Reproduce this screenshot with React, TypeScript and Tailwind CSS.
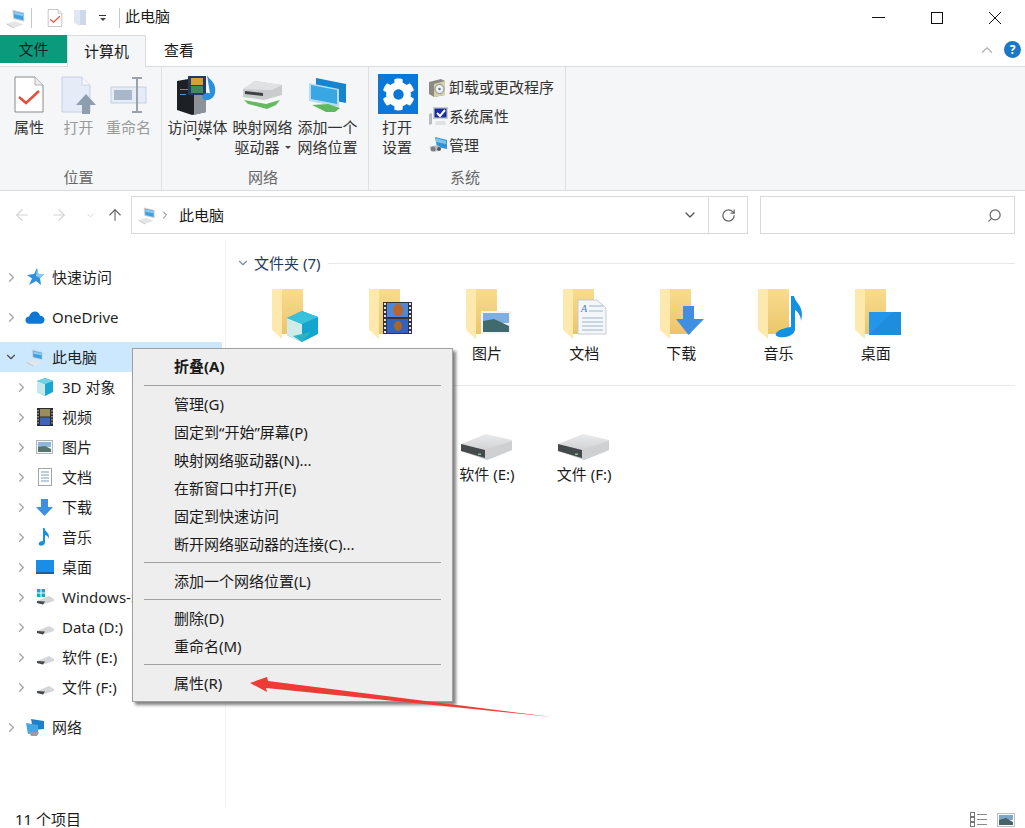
import { ArrowLeft, ArrowRight, ArrowUp, ChevronDown, ChevronRight, ChevronUp, RotateCw, Search } from "lucide-react";
import { FaCog } from "react-icons/fa";
import type { ReactNode } from "react";

/* ---------- icons ---------- */

function PcIcon({ size = 22 }: { size?: number }) {
  return (
    <svg width={size} height={size} viewBox="0 0 24 24">
      <polygon points="8,3 21,6 21,16 9,13" fill="#c9ced3" />
      <polygon points="9.5,4.5 20,7 20,14.5 10,12" fill="#3f9fe0" />
      <polygon points="10,5 20,7.5 20,10 10,8" fill="#8ccbf0" />
      <polygon points="2,18 11,15.5 20,19 10,22.5" fill="#e4e5e6" />
      <polygon points="2,18 10,22.5 10,23.5 2,19" fill="#b5b7b9" />
    </svg>
  );
}

function CheckDoc({ w = 30, h = 37 }: { w?: number; h?: number }) {
  return (
    <svg width={w} height={h} viewBox="0 0 30 37">
      <path d="M1 1H21L29 9V36H1Z" fill="#fff" stroke="#8a8a8a" />
      <path d="M21 1V9H29" fill="#ececec" stroke="#b5b5b5" />
      <path d="M5 21L12 27L25 15" fill="none" stroke="#e2503b" strokeWidth="2.5" />
    </svg>
  );
}

function OpenDoc() {
  return (
    <svg width="36" height="38" viewBox="0 0 36 38">
      <path d="M1 1H21L29 9V36H1Z" fill="#e6ecf7" stroke="#c6d0e2" />
      <path d="M21 1V9H29" fill="#f5f7fb" stroke="#ccd4e2" />
      <path d="M25 18L35 29H29V38H21V29H15Z" fill="#8f9db0" />
    </svg>
  );
}

function RenameIcon() {
  return (
    <svg width="38" height="36" viewBox="0 0 38 36">
      <rect x="1" y="10" width="35" height="16" fill="#e6ecf7" stroke="#c6d0e2" />
      <rect x="4" y="13" width="18" height="10" fill="#aab6c9" />
      <path d="M22 1H32M27 1V35M22 35H32" fill="none" stroke="#9aa2ad" strokeWidth="2" />
    </svg>
  );
}

function MediaIcon() {
  return (
    <svg width="44" height="42" viewBox="0 0 44 42">
      <polygon points="1,7 18,4 30,8 30,38 16,41 1,36" fill="#1d2126" />
      <polygon points="18,12 30,8 30,38 18,41" fill="#8d9299" />
      <rect x="4" y="15" width="8" height="1" fill="#5d8fc2" />
      <rect x="4" y="20" width="6" height="1" fill="#5d8fc2" />
      <rect x="12" y="2" width="18" height="19" fill="#243a63" />
      <rect x="15" y="4" width="12" height="7" fill="#d6a032" />
      <rect x="15" y="12" width="12" height="7" fill="#3e8a5a" />
      <path d="M31 1C33 6 41 8 39 19C38 24 33 27 29 26C25 25 26 20 30 19C32 18.500 33 19 34 19.500Z" fill="#2a8fdc" />
    </svg>
  );
}

function MapDriveIcon() {
  return (
    <svg width="42" height="30" viewBox="0 0 42 30">
      <polygon points="1,9 13,1 40,5 40,15 22,20 1,17" fill="#c9cbcd" />
      <polygon points="13,1 40,5 30,10 1,9" fill="#e0e1e2" />
      <polygon points="3,11 21,13 21,16 3,14" fill="#3f4245" />
      <polygon points="2,20 24,24 38,20 34,25 25,29 6,24" fill="#63ba5f" />
    </svg>
  );
}

function NetworkPlaceIcon() {
  return (
    <svg width="40" height="36" viewBox="0 0 40 36">
      <polygon points="8,1 38,7 38,26 8,20" fill="#1684cf" />
      <polygon points="1,6 31,12 31,30 1,24" fill="#b5dcf3" />
      <polygon points="3,8 29,13 29,27 3,22" fill="#39a7e4" />
      <polygon points="4,28 20,27 32,31 27,35 18,35" fill="#5fb85d" />
    </svg>
  );
}

function UninstallIcon() {
  return (
    <svg width="20" height="20" viewBox="0 0 20 20">
      <polygon points="1,5 13,2 17,4 17,18 6,20 1,17" fill="#8a8b7e" />
      <polygon points="6,7 17,4 17,18 6,20" fill="#d8cfa8" />
      <circle cx="11.500" cy="12" r="4.500" fill="#eef2f5" stroke="#7d8a94" />
      <circle cx="11.500" cy="12" r="1.300" fill="#6d7a85" />
    </svg>
  );
}

function SysPropIcon() {
  return (
    <svg width="21" height="20" viewBox="0 0 21 20">
      <rect x="5" y="1" width="15" height="12" fill="#c9ced3" />
      <rect x="6.500" y="2.500" width="12" height="9" fill="#1c2c9c" />
      <path d="M9 7L12 10L17 4" fill="none" stroke="#fff" strokeWidth="2" />
      <polygon points="1,8 4,7 4,18 1,19" fill="#b7bbc0" />
      <polygon points="8,15 17,15 18,19 7,19" fill="#dfe1e3" />
    </svg>
  );
}

function ManageIcon() {
  return (
    <svg width="20" height="18" viewBox="0 0 20 18">
      <polygon points="7,1 19,4 19,13 9,11" fill="#2f93dc" />
      <polygon points="8,2 18,5 18,8 8,6" fill="#7cc3ee" />
      <polygon points="1,11 9,9 14,12 7,16" fill="#bdbfc1" />
      <circle cx="5" cy="13" r="2.500" fill="#7b7f84" />
      <circle cx="11" cy="13" r="2" fill="#55595e" />
    </svg>
  );
}

function StarIcon() {
  return (
    <svg width="20" height="20" viewBox="0 0 20 20">
      <polygon points="12,1 13.500,7 19,7 15,11 16,18 11,14 4,18 7,11.500 2,8 9,7" fill="#2e8fdc" />
      <polygon points="12,1 13.500,7 19,7 15,11 11,9" fill="#8cc8f0" />
    </svg>
  );
}

function CloudIcon() {
  return (
    <svg width="20" height="15" viewBox="0 0 22 16">
      <path d="M5 15C2 15 0.500 13 0.500 11C0.500 8.500 2.500 7 4.500 7C5.500 3.500 8 1.500 11 1.500C14 1.500 16 3.500 16.500 6C19.500 6 21.500 8 21.500 10.500C21.500 13 19.500 15 17 15Z" fill="#0f78d4" />
    </svg>
  );
}

function NetIcon() {
  return (
    <svg width="20" height="18" viewBox="0 0 20 18">
      <polygon points="6,1 19,3 19,11 8,12" fill="#1f80c9" />
      <polygon points="1,5 13,7 13,15 3,16" fill="#41a7e6" />
      <polygon points="4,14 14,14 12,18 6,18" fill="#9a9da1" />
    </svg>
  );
}

function CubeSmall() {
  return (
    <svg width="20" height="20" viewBox="0 0 20 20">
      <polygon points="10,1 18,4 18,15 10,19 2,15 2,4" fill="#19a7cf" />
      <polygon points="2,4 10,7 10,19 2,15" fill="#c8e9ea" />
      <polygon points="10,1 18,4 10,7 2,4" fill="#6fd2e6" />
    </svg>
  );
}

function FilmSmall() {
  return (
    <svg width="16" height="18" viewBox="0 0 16 18">
      <rect width="16" height="18" fill="#2c2c30" />
      <rect x="3" y="1" width="10" height="7.500" fill="#9a8d5c" />
      <rect x="3" y="9.500" width="10" height="7.500" fill="#3c66b5" />
      <path d="M1 2V16M15 2V16" stroke="#d8d8d8" strokeDasharray="1.500 1.500" />
    </svg>
  );
}

function PicSmall() {
  return (
    <svg width="17" height="14" viewBox="0 0 17 14">
      <rect x="0.500" y="0.500" width="16" height="13" fill="#f6f7f8" stroke="#b0b6bc" />
      <rect x="2" y="2" width="13" height="5" fill="#8fb7dc" />
      <polygon points="2,7 9,6 15,9 15,12 2,12" fill="#56756f" />
    </svg>
  );
}

function DocSmall() {
  return (
    <svg width="14" height="18" viewBox="0 0 14 18">
      <rect x="0.500" y="0.500" width="13" height="17" fill="#fff" stroke="#9fa6ad" />
      <path d="M3 4H11M3 7H11M3 10H11M3 13H11" stroke="#7c9cb8" />
    </svg>
  );
}

function DownSmall() {
  return (
    <svg width="17" height="17" viewBox="0 0 17 17">
      <path d="M5 0H12V8H17L8.500 17L0 8H5Z" fill="#3d8fe0" />
    </svg>
  );
}

function NoteSmall() {
  return (
    <svg width="13" height="18" viewBox="0 0 13 18">
      <path d="M5 0H6.500C7 4 12.500 5 10.500 11C10.500 8 8.500 7.500 7 7V14.500C7 17 4 18 2 17.500C-0.500 16.500 0.500 13 5 13Z" fill="#1a8fe0" />
    </svg>
  );
}

function DesktopSmall() {
  return (
    <svg width="18" height="14" viewBox="0 0 18 14">
      <rect width="18" height="14" fill="#1a8ee6" />
      <rect y="12" width="18" height="2" fill="#1c5f99" />
    </svg>
  );
}

function DriveSmall({ windows }: { windows?: boolean }) {
  return (
    <svg width="20" height="16" viewBox="0 0 20 16">
      {windows && (
        <g fill="#18a6c9">
          <rect x="2" y="0" width="3.500" height="3.500" />
          <rect x="6.500" y="0" width="3.500" height="3.500" />
          <rect x="2" y="4.500" width="3.500" height="3.500" />
          <rect x="6.500" y="4.500" width="3.500" height="3.500" />
        </g>
      )}
      <polygon points="2,12 14,7 19,10 19,12 8,15.500 2,14" fill="#d5d6d7" />
      <polygon points="2,12 10,12.500 8,15.500 2,14" fill="#45484b" />
    </svg>
  );
}

function Folder({ children }: { children?: ReactNode }) {
  return (
    <svg width="50" height="54" viewBox="0 0 50 54">
      <defs>
        <linearGradient id="folderBack" x1="0" y1="0" x2="0" y2="1">
          <stop offset="0" stopColor="#f8dc8f" />
          <stop offset="1" stopColor="#ecc56a" />
        </linearGradient>
      </defs>
      <rect x="14" y="1" width="21" height="45" fill="url(#folderBack)" />
      <polygon points="4,1 14,1 14,51 4,42" fill="#fde9ae" />
      {children}
    </svg>
  );
}

const folderOverlays: Record<string, ReactNode> = {
  cube: (
    <g>
      <polygon points="34,23 50,29 50,46 34,54 19,47 19,30" fill="#12a6cf" />
      <polygon points="19,30 34,36 34,54 19,47" fill="#cfeceb" />
      <polygon points="34,23 50,29 34,36 19,30" fill="#38c0dd" />
      <polygon points="25,48 43,44 34,54" fill="#2ab5c6" />
    </g>
  ),
  film: (
    <g>
      <rect x="18" y="14" width="29" height="32" fill="#33343a" />
      <rect x="22" y="15" width="21" height="14" fill="#4f87d8" />
      <rect x="22" y="31" width="21" height="14" fill="#2f63bd" />
      <ellipse cx="33" cy="22" rx="5" ry="6" fill="#b9662b" />
      <ellipse cx="33" cy="38" rx="4" ry="5" fill="#a8652a" />
      <path d="M20 15V46M45 15V46" stroke="#e4e4e4" strokeWidth="2" strokeDasharray="2 2" />
    </g>
  ),
  picture: (
    <g>
      <rect x="19" y="23" width="30" height="23" fill="#f2f4f6" />
      <rect x="21" y="25" width="26" height="10" fill="#7fafe0" />
      <polygon points="21,33 32,31 47,38 47,44 21,44" fill="#3f6b6e" />
    </g>
  ),
  doc: (
    <g>
      <path d="M19 12H38L47 20V46H19Z" fill="#f4f7fa" stroke="#c4ccd3" />
      <path d="M30 18H44M30 23H44M23 30H44M23 34H44M23 38H44M23 42H44" stroke="#9fb4c6" />
      <text x="22" y="24" fontSize="10" fontStyle="italic" fontFamily="'Liberation Serif', serif" fill="#3d7cc4">A</text>
    </g>
  ),
  down: <path d="M27 18H38V31H48L32.500 47L20 31H27Z" fill="#3f8fe3" />,
  music: <path d="M37 8H40C41 15 51 18 47 33C47 27 43 23 41 22V41C41 47 33 50 25 49C18 48 22 41 37 39Z" fill="#1191e2" />,
  desktop: (
    <g>
      <rect x="18" y="24" width="32" height="23" fill="#2196ea" />
      <polygon points="18,47 42,24 50,24 50,47" fill="#1f8ddd" />
    </g>
  ),
};

function LargeDrive() {
  return (
    <svg width="54" height="32" viewBox="0 0 54 32">
      <defs>
        <linearGradient id="driveFace" x1="0" y1="0" x2="0" y2="1">
          <stop offset="0" stopColor="#e9eaeb" />
          <stop offset="1" stopColor="#c2c4c6" />
        </linearGradient>
      </defs>
      <polygon points="1,13 26,3 52,9 52,19 27,29 1,20" fill="url(#driveFace)" />
      <polygon points="1,13 25,19 25,27 1,20" fill="#44494c" />
      <polygon points="25,19 52,10 52,19 27,29 25,27" fill="#cfd0d2" />
      <rect x="18" y="22.500" width="3" height="1.500" fill="#7cc98a" />
    </svg>
  );
}

/* ---------- ribbon ---------- */

function RibbonBtn({ icon, lines, w, gray, caret }: { icon: ReactNode; lines: string[]; w: string; gray?: boolean; caret?: boolean }) {
  return (
    <div className={`flex flex-col items-center pt-[5px] ${w}`}>
      <div className="flex h-[45px] items-center justify-center">{icon}</div>
      {lines.map((l, i) => (
        <div key={l} className={`flex h-5 items-center whitespace-nowrap leading-5 ${gray ? "text-[#9a9a9a]" : "text-[#333333]"}`}>
          {l}
          {caret && i === lines.length - 1 && lines.length > 1 && <Caret className="ml-[5px]" />}
        </div>
      ))}
      {caret && lines.length === 1 && <Caret className="mt-[1px]" />}
    </div>
  );
}

function Caret({ className = "" }: { className?: string }) {
  return <span className={`inline-block h-0 w-0 border-x-[3px] border-t-[3px] border-x-transparent border-t-[#444444] ${className}`} />;
}

function RibbonGroup({ label, w, children }: { label: string; w: string; children: ReactNode }) {
  return (
    <div className={`flex h-full flex-col border-r border-[#dfe0e1] ${w}`}>
      <div className="flex h-[100px] items-start">{children}</div>
      <div className="mt-auto mb-[3px] h-5 pr-[4px] text-center leading-5 text-[#666666]">{label}</div>
    </div>
  );
}

/* ---------- nav tree ---------- */

function TreeRow({ icon, label, child, open, active }: { icon: ReactNode; label: string; child?: boolean; open?: boolean; active?: boolean }) {
  return (
    <div className={`flex h-[30px] w-[222px] items-center ${active ? "bg-[#cce8ff]" : ""}`}>
      <div className={`flex shrink-0 justify-center ${child ? "w-[30px] pl-[12px]" : "w-[22px]"}`}>
        {open ? <ChevronDown size={14} className="text-[#4a4a4a]" /> : <ChevronRight size={15} className="text-[#a6a6a6]" />}
      </div>
      <div className={`flex shrink-0 items-center justify-center ${child ? "ml-[1px] w-[27px]" : "w-[26px]"}`}>{icon}</div>
      <span className="ml-[4px] whitespace-nowrap text-[#1f1f1f]">{label}</span>
    </div>
  );
}

const treeChildren: { label: string; icon: ReactNode }[] = [
  { label: "3D 对象", icon: <CubeSmall /> },
  { label: "视频", icon: <FilmSmall /> },
  { label: "图片", icon: <PicSmall /> },
  { label: "文档", icon: <DocSmall /> },
  { label: "下载", icon: <DownSmall /> },
  { label: "音乐", icon: <NoteSmall /> },
  { label: "桌面", icon: <DesktopSmall /> },
  { label: "Windows-SSD (C:)", icon: <DriveSmall windows /> },
  { label: "Data (D:)", icon: <DriveSmall /> },
  { label: "软件 (E:)", icon: <DriveSmall /> },
  { label: "文件 (F:)", icon: <DriveSmall /> },
];

/* ---------- content ---------- */

// the first two labels of each row sit behind the context menu, so they are left blank
const folders = [
  { id: "3d", label: "", overlay: "cube" },
  { id: "video", label: "", overlay: "film" },
  { id: "pictures", label: "图片", overlay: "picture" },
  { id: "docs", label: "文档", overlay: "doc" },
  { id: "downloads", label: "下载", overlay: "down" },
  { id: "music", label: "音乐", overlay: "music" },
  { id: "desktop", label: "桌面", overlay: "desktop" },
];

const drives = [
  { id: "c", label: "" },
  { id: "d", label: "" },
  { id: "e", label: "软件 (E:)" },
  { id: "f", label: "文件 (F:)" },
];

function SectionHeader({ label }: { label?: string }) {
  return (
    <div className="flex h-5 items-center">
      <ChevronDown size={14} className="ml-[5px] text-[#7b8ea3]" />
      <span className="ml-[4px] whitespace-nowrap text-[#1e3a5f]">{label}</span>
      <div className="ml-2 mr-[10px] h-px flex-1 bg-[#e6e9ee]" />
    </div>
  );
}

/* ---------- context menu ---------- */

function MenuItem({ label, bold }: { label: string; bold?: boolean }) {
  return <div className={`flex h-[28px] items-center pl-[41px] text-[#1a1a1a] ${bold ? "font-bold" : ""}`}>{label}</div>;
}

function MenuSep({ h = "h-[9px]" }: { h?: string }) {
  return (
    <div className={`flex items-center px-[11px] ${h}`}>
      <div className="h-px w-full bg-[#a0a0a0]" />
    </div>
  );
}

function ContextMenu() {
  return (
    <div className="absolute left-[132px] top-[348px] z-10 h-[354px] w-[321px] border border-[#a0a0a0] bg-[#eeeeee] pt-[3px] shadow-[3px_3px_3px_rgba(90,90,90,0.75)]">
      <MenuItem label="折叠(A)" bold />
      <MenuSep h="h-[10px]" />
      <MenuItem label="管理(G)" />
      <MenuItem label="固定到“开始”屏幕(P)" />
      <MenuItem label="映射网络驱动器(N)..." />
      <MenuItem label="在新窗口中打开(E)" />
      <MenuItem label="固定到快速访问" />
      <MenuItem label="断开网络驱动器的连接(C)..." />
      <MenuSep />
      <MenuItem label="添加一个网络位置(L)" />
      <MenuSep />
      <MenuItem label="删除(D)" />
      <MenuItem label="重命名(M)" />
      <MenuSep />
      <MenuItem label="属性(R)" />
    </div>
  );
}

export default function App() {
  return (
    <div className="relative flex h-[828px] w-[1025px] flex-col overflow-hidden bg-white font-['Noto_Sans','Noto_Sans_CJK_SC',sans-serif] text-[15px] text-[#1a1a1a]">
      {/* Title bar */}
      <div className="flex h-[35px] shrink-0 items-center">
        <div className="ml-[5px] flex w-[22px] justify-center"><PcIcon /></div>
        <div className="ml-[4px] h-5 w-px bg-[#c8c8c8]" />
        <div className="ml-[15px]"><CheckDoc w={16} h={18} /></div>
        <svg width="14" height="18" viewBox="0 0 14 18" className="ml-[10px]">
          <polygon points="1,1 7,1 7,17 1,14" fill="#dfe7f3" />
          <rect x="7" y="1" width="6" height="15" fill="#cdd9ea" />
        </svg>
        <div className="ml-[11px] flex w-[9px] flex-col items-center gap-[2px]">
          <div className="h-px w-[7px] bg-[#333333]" />
          <Caret />
        </div>
        <div className="ml-[12px] h-5 w-px bg-[#c8c8c8]" />
        <span className="ml-[5px] mb-[2px] text-[#1a1a1a]">此电脑</span>
        <div className="ml-auto flex items-center">
          <div className="mr-[46px] h-px w-[13px] bg-[#111111]" />
          <div className="mr-[45px] h-[12px] w-[12px] border border-[#111111]" />
          <svg width="14" height="14" viewBox="0 0 14 14" className="mr-[23px]">
            <path d="M1 1L13 13M13 1L1 13" stroke="#111111" />
          </svg>
        </div>
      </div>

      {/* Tabs */}
      <div className="relative flex h-[32px] shrink-0 border-b border-[#dadbdc]">
        <div className="flex h-[28px] w-[67px] items-center justify-center bg-[#0c9a7d] text-[#10231f]">文件</div>
        <div className="relative z-[1] flex h-[32px] w-[79px] items-center justify-center border-x border-t border-[#dadbdc] bg-[#f5f6f7]">计算机</div>
        <div className="flex h-[31px] w-[66px] items-center justify-center">查看</div>
        <div className="ml-auto flex items-center pb-[2px]">
          <ChevronUp size={18} className="mr-[8px] text-[#b8b8b8]" />
          <div className="mr-[4px] flex h-[17px] w-[17px] items-center justify-center rounded-full bg-[#1a78c8] text-[12px] font-bold text-white">?</div>
        </div>
      </div>

      {/* Ribbon */}
      <div className="flex h-[124px] shrink-0 border-b border-[#dadbdc] bg-[#f5f6f7]">
        <RibbonGroup label="位置" w="w-[162px]">
          <div className="ml-[4px] flex">
            <RibbonBtn w="w-[50px]" lines={["属性"]} icon={<CheckDoc />} />
            <RibbonBtn w="w-[49px]" gray lines={["打开"]} icon={<OpenDoc />} />
            <RibbonBtn w="w-[51px]" gray lines={["重命名"]} icon={<RenameIcon />} />
          </div>
        </RibbonGroup>
        <RibbonGroup label="网络" w="w-[207px]">
          <div className="ml-[3px] flex">
            <RibbonBtn w="w-[65px]" caret lines={["访问媒体"]} icon={<MediaIcon />} />
            <RibbonBtn w="w-[65px]" caret lines={["映射网络", "驱动器"]} icon={<MapDriveIcon />} />
            <RibbonBtn w="w-[65px]" lines={["添加一个", "网络位置"]} icon={<NetworkPlaceIcon />} />
          </div>
        </RibbonGroup>
        <RibbonGroup label="系统" w="w-[197px]">
          <div className="flex">
            <div className="ml-[8px] flex w-[40px] flex-col items-center">
              <div className="mt-[7px] ml-[2px] flex h-[40px] w-[40px] shrink-0 items-center justify-center bg-[#0a78d7] text-white">
                <FaCog size={33} />
              </div>
              <div className="mt-[3px] h-5 whitespace-nowrap leading-5 text-[#333333]">打开</div>
              <div className="h-5 whitespace-nowrap leading-5 text-[#333333]">设置</div>
            </div>
            <div className="ml-[10px] mt-[6px] flex flex-col gap-[1px]">
              {[
                { label: "卸载或更改程序", icon: <UninstallIcon /> },
                { label: "系统属性", icon: <SysPropIcon /> },
                { label: "管理", icon: <ManageIcon /> },
              ].map((row) => (
                <div key={row.label} className="flex h-[28px] items-center">
                  <div className="flex w-[22px] justify-center">{row.icon}</div>
                  <span className="whitespace-nowrap text-[#333333]">{row.label}</span>
                </div>
              ))}
            </div>
          </div>
        </RibbonGroup>
      </div>

      {/* Address row */}
      <div className="flex h-[49px] shrink-0 items-start pt-[5px]">
        <div className="flex h-[38px] w-[131px] items-center">
          <ArrowLeft size={18} strokeWidth={1.5} className="ml-[13px] text-[#d4d4d4]" />
          <ArrowRight size={18} strokeWidth={1.5} className="ml-[19px] text-[#d4d4d4]" />
          <ChevronDown size={11} className="ml-[17px] text-[#d4d4d4]" />
          <ArrowUp size={18} strokeWidth={1.5} className="ml-[10px] text-[#666666]" />
        </div>
        <div className="flex h-[38px] w-[617px] items-center border border-[#d9d9d9]">
          <div className="ml-[5px]"><PcIcon size={20} /></div>
          <ChevronRight size={12} className="ml-[2px] text-[#777777]" />
          <span className="ml-[8px]">此电脑</span>
          <ChevronDown size={16} className="ml-auto mr-[10px] text-[#555555]" />
          <div className="flex h-full w-[39px] items-center justify-center border-l border-[#d9d9d9]">
            <RotateCw size={15} className="text-[#666666]" />
          </div>
        </div>
        <div className="ml-[12px] flex h-[38px] w-[255px] items-center justify-end border border-[#d9d9d9] pr-[12px]">
          <Search size={15} className="-scale-x-100 text-[#666666]" />
        </div>
      </div>

      {/* Main */}
      <div className="flex min-h-0 flex-1">
        <div className="w-[226px] shrink-0 overflow-hidden border-r border-[#f2f2f2] pt-[22px]">
          <div className="flex flex-col gap-[10px]">
            <TreeRow label="快速访问" icon={<StarIcon />} />
            <TreeRow label="OneDrive" icon={<CloudIcon />} />
            <div>
              <TreeRow label="此电脑" open active icon={<PcIcon size={20} />} />
              {treeChildren.map((c) => (
                <TreeRow key={c.label} child label={c.label} icon={c.icon} />
              ))}
            </div>
            <TreeRow label="网络" icon={<NetIcon />} />
          </div>
        </div>
        <div className="min-w-0 flex-1 pt-[13px] pl-[5px]">
          <SectionHeader label="文件夹 (7)" />
          <div className="ml-[13px] mt-[15px] grid grid-cols-[repeat(7,97.2px)]">
            {folders.map((f) => (
              <div key={f.id} className="flex flex-col items-center">
                <Folder>{folderOverlays[f.overlay]}</Folder>
                <div className="flex h-[22px] items-center whitespace-nowrap">{f.label}</div>
              </div>
            ))}
          </div>
          <div className="mt-[11px]">
            <SectionHeader />
          </div>
          <div className="ml-[13px] mt-[36px] grid grid-cols-[repeat(7,97.2px)]">
            {drives.map((d) => (
              <div key={d.id} className="flex flex-col items-center">
                <LargeDrive />
                <div className="flex h-[22px] items-center whitespace-nowrap">{d.label}</div>
              </div>
            ))}
          </div>
        </div>
      </div>

      {/* Status bar */}
      <div className="flex h-[20px] shrink-0 items-center pl-[15px] pt-[3px]">
        <span>11 个项目</span>
        <div className="ml-auto mr-[10px] flex items-center gap-[9px]">
          <svg width="18" height="16" viewBox="0 0 18 16">
            <g fill="none" stroke="#777777">
              <rect x="0.500" y="0.500" width="4" height="4" />
              <rect x="0.500" y="5.500" width="4" height="4" />
              <rect x="0.500" y="10.500" width="4" height="4" />
            </g>
            <path d="M7 2.500H17M7 7.500H17M7 12.500H17" stroke="#888888" />
          </svg>
          <svg width="18" height="14" viewBox="0 0 18 14">
            <rect x="0.500" y="0.500" width="17" height="13" fill="#fff" stroke="#b8bec4" />
            <rect x="2" y="2" width="14" height="5" fill="#7ea6c9" />
            <polygon points="2,7 9,5 16,9 16,12 2,12" fill="#45646a" />
          </svg>
        </div>
      </div>

      <ContextMenu />

      {/* Annotation arrow */}
      <svg className="absolute left-[245px] top-[670px] z-20" width="312" height="52" viewBox="245 670 312 52">
        <path d="M250 683L267 677L268 681L552 717L266 688L267 692Z" fill="#ee3b36" />
      </svg>
    </div>
  );
}
